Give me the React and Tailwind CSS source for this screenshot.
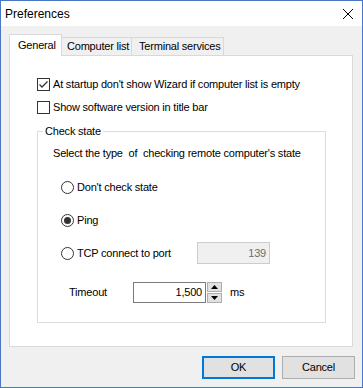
import React from "react";

const font = { fontFamily: '"Liberation Sans", Arial, sans-serif' };

function Check({ checked }) {
  return (
    <span className="w-[13px] h-[13px] border border-[#333333] bg-white flex items-center justify-center shrink-0">
      {checked && (
        <svg width="11" height="11" viewBox="0 0 11 11">
          <path d="M1.5 5.5 L4 8 L9.5 2.5" fill="none" stroke="#333333" strokeWidth="1.3" />
        </svg>
      )}
    </span>
  );
}

function Radio({ checked }) {
  return (
    <span className="w-[13px] h-[13px] rounded-full border border-[#333333] bg-white flex items-center justify-center shrink-0">
      {checked && <span className="w-[7px] h-[7px] rounded-full bg-[#333333]" />}
    </span>
  );
}

export default function App() {
  return (
    <div
      className="w-[363px] h-[388px] border border-[#4a76c6] bg-[#f0f0f0] flex flex-col text-[11px] tracking-[-0.2px] text-black whitespace-nowrap"
      style={font}
    >
      {/* title bar */}
      <div className="h-[25px] bg-white flex items-center justify-between pl-[4px] pr-[8px] shrink-0">
        <span className="text-[12px] tracking-normal">Preferences</span>
        <svg width="12" height="12" viewBox="0 0 12 12">
          <path d="M1 1 L11 11 M11 1 L1 11" stroke="#000" strokeWidth="1" />
        </svg>
      </div>

      {/* body */}
      <div className="flex flex-col pl-[8px] pr-[9px] pt-[7px]">
        {/* tabs */}
        <div className="flex items-end h-[22px]">
          <div className="relative z-10 -mb-px h-[22px] w-[53px] shrink-0 bg-white border-l border-r border-t border-[#d9d9d9] flex items-center pl-[8px] pb-[1px]">
            General
          </div>
          <div className="-ml-px h-[18px] w-[71px] shrink-0 bg-[#f0f0f0] border-l border-r border-t border-[#d9d9d9] flex items-center pl-[5px]">
            Computer list
          </div>
          <div className="-ml-px h-[18px] w-[93px] shrink-0 bg-[#f0f0f0] border-l border-r border-t border-[#d9d9d9] flex items-center pl-[7px]">
            Terminal services
          </div>
        </div>

        {/* panel */}
        <div className="w-[344px] h-[292px] bg-white border border-[#d9d9d9] flex flex-col pl-[27px] pt-[22px]">
          <div className="flex items-center h-[13px] gap-[3px]">
            <Check checked />
            <span>At startup don't show Wizard if computer list is empty</span>
          </div>
          <div className="flex items-center h-[13px] gap-[3px] mt-[10px]">
            <Check />
            <span>Show software version in title bar</span>
          </div>

          {/* group box */}
          <div className="mt-[17px] w-[289px] h-[192px] border border-[#dcdcdc] flex flex-col">
            <span className="self-start -mt-[8px] ml-[5px] px-[2px] bg-white leading-[14px]">Check state</span>
            <div className="mt-[9px] pl-[15px] h-[13px] flex items-center whitespace-pre">
              Select the type  of  checking remote computer's state
            </div>
            <div className="mt-[21px] ml-[23px] h-[13px] flex items-center gap-[3px]">
              <Radio />
              <span>Don't check state</span>
            </div>
            <div className="mt-[20px] ml-[23px] h-[13px] flex items-center gap-[3px]">
              <Radio checked />
              <span>Ping</span>
            </div>
            <div className="mt-[15px] ml-[23px] h-[22px] flex items-center">
              <div className="w-[136px] flex items-center gap-[3px]">
                <Radio />
                <span>TCP connect to port</span>
              </div>
              <div className="w-[73px] h-[22px] bg-[#f0f0f0] border border-[#cccccc] flex items-center justify-end pr-[3px] text-[#6d6d6d]">
                139
              </div>
            </div>
            <div className="mt-[18px] ml-[31px] h-[21px] flex items-center">
              <span className="w-[64px]">Timeout</span>
              <div className="w-[73px] h-[21px] bg-white border border-[#7a7a7a] flex items-center justify-end pr-[3px]">
                1,500
              </div>
              <div className="ml-[1px] w-[15px] h-[21px] flex flex-col gap-[1px]">
                <div className="h-[10px] bg-[#e1e1e1] border border-[#adadad] flex items-center justify-center">
                  <svg width="7" height="4" viewBox="0 0 7 4"><path d="M0 4 L3.5 0 L7 4 Z" fill="#000" /></svg>
                </div>
                <div className="h-[10px] bg-[#e1e1e1] border border-[#adadad] flex items-center justify-center">
                  <svg width="7" height="4" viewBox="0 0 7 4"><path d="M0 0 L3.5 4 L7 0 Z" fill="#000" /></svg>
                </div>
              </div>
              <span className="ml-[8px]">ms</span>
            </div>
          </div>
        </div>

        {/* buttons */}
        <div className="flex justify-end gap-[7px] mt-[9px]">
          <button className="w-[73px] h-[23px] bg-[#e1e1e1] border-2 border-[#0078d7] flex items-center justify-center">
            OK
          </button>
          <button className="w-[73px] h-[23px] bg-[#e1e1e1] border border-[#adadad] flex items-center justify-center mr-[-2px]">
            Cancel
          </button>
        </div>
      </div>
    </div>
  );
}
